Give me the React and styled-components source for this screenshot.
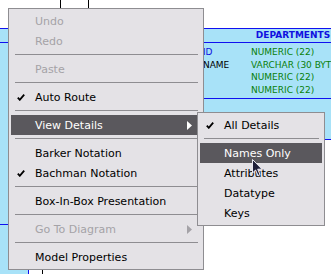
import React from 'react';
import styled, { createGlobalStyle } from 'styled-components';

const Global = createGlobalStyle`
    html, body {
        margin: 0;
        padding: 0;
        background: #fff;
    }
    body {
        font-family: "DejaVu Sans", sans-serif;
    }
`;

const Page = styled.div`
    position: relative;
    width: 331px;
    height: 274px;
    overflow: hidden;
    background: #fff;
`;

const Connector = styled.div`
    position: absolute;
    left: ${({x}) => x}px;
    top: ${({y}) => y}px;
    width: 1px;
    height: ${({h}) => h}px;
    background: #000;
`;

const Entity = styled.div`
    position: absolute;
    left: ${({x}) => x}px;
    top: ${({y}) => y}px;
    width: ${({w}) => w}px;
    display: flex;
    flex-direction: column;
    background: #a8e2f8;
    border: 1px solid #1010f0;
    font-size: 9px;
`;

const EntityHead = styled.div`
    height: 13px;
    line-height: 13px;
    text-align: center;
    font-weight: bold;
    color: #1010e0;
    border-bottom: 1px solid #1010f0;
`;

const EntityBody = styled.div`
    height: ${({h}) => h}px;
    box-sizing: border-box;
    padding-top: 3px;
    border-bottom: 1px solid #1010f0;
`;

const Column = styled.div`
    display: grid;
    grid-template-columns: 113px 1fr;
    height: 12.7px;
    line-height: 12.7px;
    padding-left: 1px;
    white-space: nowrap;
`;

const ColName = styled.span`
    color: ${({pk}) => pk ? '#1010e0' : '#000'};
`;

const ColType = styled.span`
    color: #08800a;
`;

const EntityFoot = styled.div`
    height: ${({h}) => h}px;
`;

const Popup = styled.div`
    position: absolute;
    left: ${({x}) => x}px;
    top: ${({y}) => y}px;
    width: ${({w}) => w}px;
    box-sizing: border-box;
    padding: 2px;
    background: #e4e2e6;
    border: 1px solid #8e8d91;
    font-size: 11px;
`;

const Item = styled.div`
    position: relative;
    display: flex;
    align-items: center;
    height: 20px;
    padding-left: 24px;
    white-space: nowrap;
    background: ${({active}) => active ? '#5a585d' : 'transparent'};
    color: ${({active, disabled}) => active ? '#fff' : disabled ? '#a4a2a7' : '#000'};
`;

const Check = styled.svg`
    position: absolute;
    left: 6px;
    top: 7px;
`;

const Arrow = styled.svg`
    position: absolute;
    right: 9px;
    top: 6px;
`;

const Separator = styled.div`
    height: 8px;
    display: flex;
    align-items: flex-start;
    &::after {
        content: '';
        margin: 3px 3px 0 4px;
        flex: 1;
        height: 1px;
        background: #8e8d91;
    }
`;

const Pointer = styled.svg`
    position: absolute;
    left: 252px;
    top: 159px;
`;

const CheckMark = () => (
    <Check width="8" height="7" viewBox="0 0 8 7">
        <path d="M0.8 3.6 L2.8 5.8 L7.2 0.6" fill="none" stroke="#000" strokeWidth="1.8" />
    </Check>
);

const SubArrow = ({ color }) => (
    <Arrow width="5" height="9" viewBox="0 0 5 9">
        <polygon points="0,0 5,4.5 0,9" fill={color} />
    </Arrow>
);

const MenuItem = ({ label, checked, active, disabled, sub }) => (
    <Item active={active} disabled={disabled}>
        {checked && <CheckMark />}
        {label}
        {sub && <SubArrow color={active ? '#fff' : disabled ? '#a4a2a7' : '#000'} />}
    </Item>
);

const columns = [
    { name: 'DEPARTMENT_ID', type: 'NUMERIC (22)', pk: true },
    { name: 'DEPARTMENT_NAME', type: 'VARCHAR (30 BYTE)' },
    { name: 'MANAGER_ID', type: 'NUMERIC (22)' },
    { name: 'LOCATION_ID', type: 'NUMERIC (22)' },
];

export default function App() {
    return (
        <Page>
            <Global />
            <Connector x={60} y={0} h={9} />
            <Connector x={88} y={0} h={9} />
            <Connector x={42} y={268} h={6} />

            <Entity x={-100} y={28} w={127}>
                <EntityHead />
                <EntityBody h={182} />
                <EntityFoot h={60} />
            </Entity>

            <Entity x={136} y={28} w={312}>
                <EntityHead>DEPARTMENTS</EntityHead>
                <EntityBody h={56}>
                    {columns.map(c => (
                        <Column key={c.name}>
                            <ColName pk={c.pk}>{c.name}</ColName>
                            <ColType>{c.type}</ColType>
                        </Column>
                    ))}
                </EntityBody>
                <EntityFoot h={40} />
            </Entity>

            <Popup x={8} y={8} w={196}>
                <MenuItem label="Undo" disabled />
                <MenuItem label="Redo" disabled />
                <Separator />
                <MenuItem label="Paste" disabled />
                <Separator />
                <MenuItem label="Auto Route" checked />
                <Separator />
                <MenuItem label="View Details" active sub />
                <Separator />
                <MenuItem label="Barker Notation" />
                <MenuItem label="Bachman Notation" checked />
                <Separator />
                <MenuItem label="Box-In-Box Presentation" />
                <Separator />
                <MenuItem label="Go To Diagram" disabled sub />
                <Separator />
                <MenuItem label="Model Properties" />
            </Popup>

            <Popup x={197} y={112} w={128}>
                <MenuItem label="All Details" checked />
                <Separator />
                <MenuItem label="Names Only" active />
                <MenuItem label="Attributes" />
                <MenuItem label="Datatype" />
                <MenuItem label="Keys" />
            </Popup>

            <Pointer width="12" height="18" viewBox="0 0 12 18">
                <path d="M0.5 0.5 L0.5 14 L3.6 11 L6 16.5 L8 15.6 L5.7 10.2 L10 10.2 Z"
                    fill="#1e1e38" stroke="#e8e8f0" strokeWidth="1" />
            </Pointer>
        </Page>
    );
}
